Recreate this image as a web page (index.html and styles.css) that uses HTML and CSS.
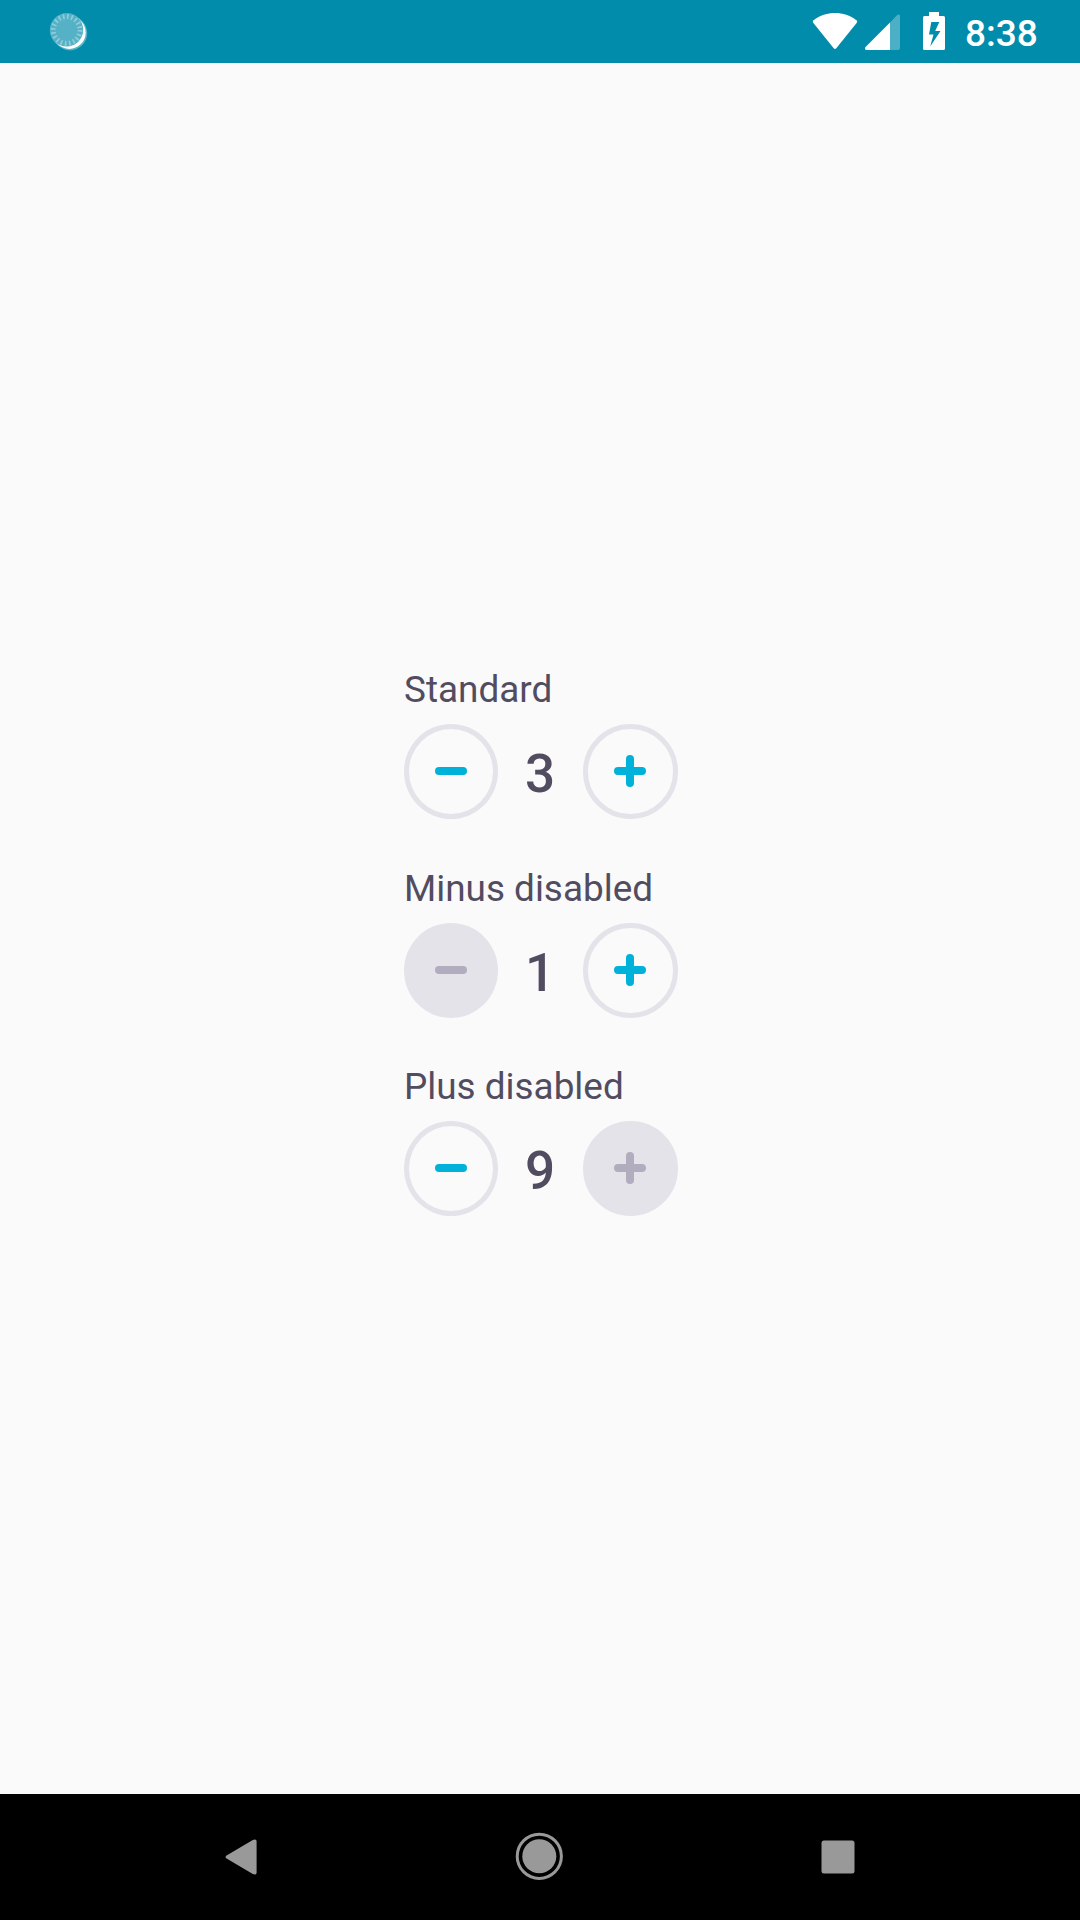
FILE: index.html
```html
<!DOCTYPE html>
<html lang="en">
<head>
<meta charset="utf-8">
<title>Stepper</title>
<link rel="stylesheet" href="styles.css">
</head>
<body>
<header class="status">
  <svg class="spinner" width="40" height="40" viewBox="0 0 40 40">
    <circle cx="21" cy="21.2" r="17.2" fill="#fff" opacity=".35"/>
    <circle cx="20.3" cy="20.5" r="16.4" fill="#fff"/>
    <circle cx="18" cy="18.3" r="17.2" fill="#fff" opacity=".25"/>
    <circle cx="17.6" cy="17.9" r="16.6" fill="#55b1c6"/>
    <circle cx="17.6" cy="18" r="13.4" fill="none" stroke="#8fccda" stroke-width="5" stroke-dasharray="1.7 2.51"/>
  </svg>
  <div class="status-right">
    <svg class="wifi" width="46" height="37" viewBox="0 0 46 37"><path d="M1.2 9.8Q.2 8.3 1.6 7.2C14-2.4 32-2.4 44.4 7.2Q45.8 8.3 44.8 9.8L24.3 35.2Q23 36.8 21.7 35.2Z" fill="#fff"/></svg>
    <svg class="signal" width="35" height="36" viewBox="0 0 35 36"><path d="M25 8.5 32 1.2Q33 .2 34 .6Q35 1 35 2.2V34Q35 36 33 36H25Z" fill="#4dafc5"/><path d="M25 8.5V36H1.8Q0 36 0 34.5Q0 33.6.8 32.8Z" fill="#fff"/></svg>
    <svg class="battery" width="22" height="38" viewBox="0 0 22 38"><path fill-rule="evenodd" d="M6 0H16V4H20.5Q22 4 22 5.5V36.5Q22 38 20.5 38H1.5Q0 38 0 36.5V5.5Q0 4 1.5 4H6ZM8.3 10 6 22.5H10.5L7.2 34.5 17.5 19H12.2L16.3 10Z" fill="#fff"/></svg>
    <span class="time">8:38</span>
  </div>
</header>
<main class="content">
  <section class="stepper">
    <div class="label">Standard</div>
    <div class="controls">
      <div class="button minus"><svg width="32" height="32"><path d="M4 16H28"/></svg></div>
      <div class="value">3</div>
      <div class="button plus"><svg width="32" height="32"><path d="M4 16H28M16 4V28"/></svg></div>
    </div>
  </section>
  <section class="stepper">
    <div class="label">Minus disabled</div>
    <div class="controls">
      <div class="button minus disabled"><svg width="32" height="32"><path d="M4 16H28"/></svg></div>
      <div class="value">1</div>
      <div class="button plus"><svg width="32" height="32"><path d="M4 16H28M16 4V28"/></svg></div>
    </div>
  </section>
  <section class="stepper">
    <div class="label">Plus disabled</div>
    <div class="controls">
      <div class="button minus"><svg width="32" height="32"><path d="M4 16H28"/></svg></div>
      <div class="value">9</div>
      <div class="button plus disabled"><svg width="32" height="32"><path d="M4 16H28M16 4V28"/></svg></div>
    </div>
  </section>
</main>
<nav class="navbar">
  <svg width="48" height="48" viewBox="0 0 48 48"><path d="M10 22.2 35.8 6.9Q39.6 5.4 39.6 8.6V39.4Q39.6 42.6 35.8 41.1L10 25.8Q7 24 10 22.2Z" fill="#999"/></svg>
  <svg width="48" height="48" viewBox="0 0 48 48"><circle cx="23.3" cy="23.3" r="17" fill="#999"/><circle cx="23.3" cy="23.3" r="22.1" fill="none" stroke="#999" stroke-width="3"/></svg>
  <svg width="48" height="48" viewBox="0 0 48 48"><rect x="7.5" y="7.5" width="33" height="33" rx="2.5" fill="#999"/></svg>
</nav>
</body>
</html>
```
FILE: styles.css
```css
body {
  margin: 0;
  width: 1080px;
  height: 1920px;
  display: flex;
  flex-direction: column;
  background: #fafafa;
  font-family: Roboto, sans-serif;
}
svg {
  display: block;
  flex: none;
  overflow: visible;
}
.status {
  height: 63px;
  box-sizing: border-box;
  padding: 0 42px 0 49px;
  display: flex;
  justify-content: space-between;
  background: #008caa;
}
.spinner {
  margin-top: 12px;
}
.status-right {
  display: flex;
  color: #fff;
}
.wifi {
  margin-top: 13px;
}
.signal {
  margin: 14px 0 0 7px;
}
.battery {
  margin: 12px 0 0 23px;
}
.time {
  width: 73px;
  margin-left: 20px;
  font-size: 37px;
  font-weight: 500;
  line-height: 43px;
  padding-top: 12px;
  white-space: nowrap;
}
.content {
  flex: 1;
  padding: 605px 0 0 404px;
}
.stepper {
  margin-bottom: 48px;
}
.stepper:nth-child(2) {
  margin-bottom: 47px;
}
.label {
  height: 43px;
  line-height: 43px;
  margin-bottom: 13px;
  font-size: 36.9px;
  color: #524c61;
}
.controls {
  display: flex;
  height: 95px;
}
.button {
  box-sizing: border-box;
  width: 95px;
  height: 95px;
  padding-bottom: 1px;
  border: 5px solid #e4e3ea;
  border-radius: 50%;
  display: flex;
  align-items: center;
  justify-content: center;
}
.minus {
  width: 94px;
}
.plus {
  padding-right: 1px;
}
.button path {
  fill: none;
  stroke: #00b2d9;
  stroke-width: 8;
  stroke-linecap: round;
}
.disabled {
  background: #e4e3ea;
}
.disabled path {
  stroke: #b1adbe;
}
.value {
  box-sizing: border-box;
  width: 85px;
  padding-right: 1px;
  line-height: 101px;
  text-align: center;
  font-size: 53px;
  font-weight: 500;
  color: #524c61;
}
.navbar {
  height: 126px;
  display: flex;
  justify-content: space-between;
  align-items: center;
  padding: 0 218px 0 217px;
  background: #000;
}
```
